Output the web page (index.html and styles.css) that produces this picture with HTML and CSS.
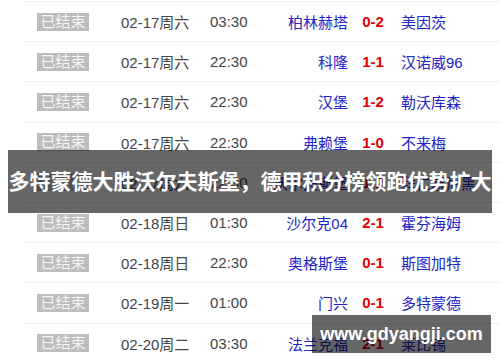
FILE: index.html
```html
<!DOCTYPE html>
<html lang="zh">
<head>
<meta charset="utf-8">
<link rel="stylesheet" href="styles.css">
</head>
<body>
<div class="page">
  <div class="table">
    <div class="row"><span class="badge">已结束</span><span class="date">02-17周六</span><span class="time">03:30</span><span class="home">柏林赫塔</span><span class="score">0-2</span><span class="away">美因茨</span></div>
    <div class="row"><span class="badge">已结束</span><span class="date">02-17周六</span><span class="time">22:30</span><span class="home">科隆</span><span class="score">1-1</span><span class="away">汉诺威96</span></div>
    <div class="row"><span class="badge">已结束</span><span class="date">02-17周六</span><span class="time">22:30</span><span class="home">汉堡</span><span class="score">1-2</span><span class="away">勒沃库森</span></div>
    <div class="row"><span class="badge">已结束</span><span class="date">02-17周六</span><span class="time">22:30</span><span class="home">弗赖堡</span><span class="score">1-0</span><span class="away">不来梅</span></div>
    <div class="row"><span class="badge">已结束</span><span class="date">02-17周六</span><span class="time">22:30</span><span class="home">沃尔夫斯堡</span><span class="score">1-2</span><span class="away">拜仁慕尼黑</span></div>
    <div class="row"><span class="badge">已结束</span><span class="date">02-18周日</span><span class="time">01:30</span><span class="home">沙尔克04</span><span class="score">2-1</span><span class="away">霍芬海姆</span></div>
    <div class="row"><span class="badge">已结束</span><span class="date">02-18周日</span><span class="time">22:30</span><span class="home">奥格斯堡</span><span class="score">0-1</span><span class="away">斯图加特</span></div>
    <div class="row"><span class="badge">已结束</span><span class="date">02-19周一</span><span class="time">01:00</span><span class="home">门兴</span><span class="score">0-1</span><span class="away">多特蒙德</span></div>
    <div class="row"><span class="badge">已结束</span><span class="date">02-20周二</span><span class="time">03:30</span><span class="home">法兰克福</span><span class="score">2-1</span><span class="away">莱比锡</span></div>
  </div>
  <div class="banner">多特蒙德大胜沃尔夫斯堡，德甲积分榜领跑优势扩大</div>
  <div class="watermark">www.gdyangji.com</div>
</div>
</body>
</html>
```
FILE: styles.css
```css
html, body {
  margin: 0;
  padding: 0;
  background: #fff;
}
body {
  font-family: "Liberation Sans", "Noto Sans CJK SC", sans-serif;
  font-size: 15px;
  width: 500px;
  height: 362px;
  overflow: hidden;
}
.page {
  position: relative;
  width: 500px;
  height: 362px;
}
.table {
  margin-left: 25px;
  padding-top: 1px;
}
.row {
  box-sizing: border-box;
  height: 40.2px;
  border-top: 1px solid #eeeeee;
  display: grid;
  grid-template-columns: 84px 89px 60px 78px 50px 1fr;
  align-items: center;
  padding-left: 12px;
  white-space: nowrap;
}
.badge {
  width: 52px;
  height: 18px;
  line-height: 18px;
  background: #bdbdbd;
  color: #f4f4f4;
  text-align: center;
  font-size: 15px;
}
.date, .time {
  color: #444;
}
.home {
  color: #2323c8;
  text-align: right;
}
.score {
  color: #e00000;
  font-weight: bold;
  text-align: center;
}
.away {
  color: #2323c8;
  padding-left: 3px;
}
.banner {
  position: absolute;
  left: 8px;
  top: 150px;
  width: 484px;
  height: 63px;
  background: rgba(0, 0, 0, 0.6);
  color: #fff;
  font-weight: bold;
  font-size: 21px;
  line-height: 63px;
  text-align: center;
  white-space: nowrap;
}
.watermark {
  position: absolute;
  left: 312px;
  top: 315px;
  width: 179px;
  height: 38px;
  background: rgba(0, 0, 0, 0.6);
  color: #fff;
  font-weight: bold;
  font-size: 18px;
  line-height: 38px;
  text-align: center;
  white-space: nowrap;
}
```
